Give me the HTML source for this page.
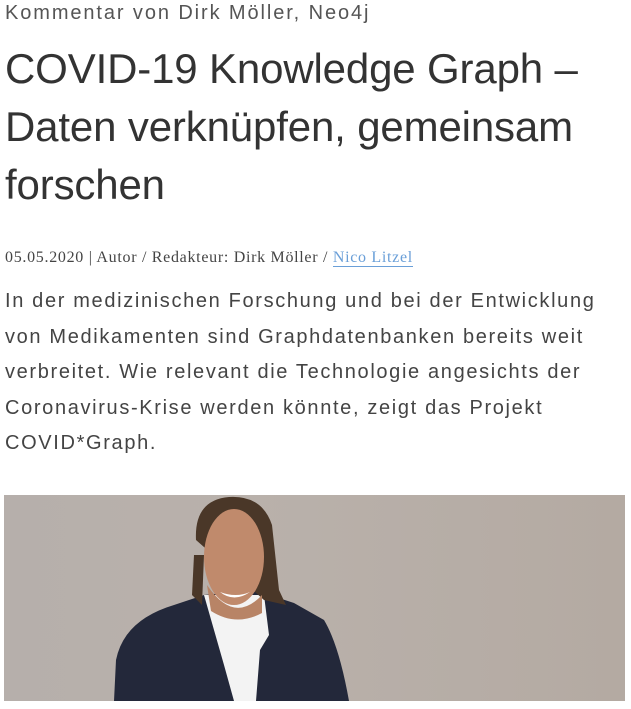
<!DOCTYPE html>
<html><head><meta charset="utf-8"><style>
body{margin:0;background:#fff;width:631px;height:709px;overflow:hidden;font-family:"Liberation Sans",sans-serif;color:#333}
.k{position:absolute;left:5px;top:2px;font-size:20px;color:#555;white-space:nowrap;letter-spacing:1.9px}
h1{position:absolute;left:5px;top:40px;margin:0;font-weight:300;font-size:42px;line-height:58px;color:#333;width:630px;letter-spacing:-0.15px}
.m{position:absolute;left:5px;top:249px;font-family:"Liberation Serif",serif;font-size:16px;color:#444;white-space:nowrap;letter-spacing:0.7px}
.m a{color:#6a9fd8;text-decoration:none;border-bottom:1px solid #6a9fd8}
.l{position:absolute;left:5px;top:284px;font-size:20px;line-height:35.5px;color:#444;width:630px;letter-spacing:1.65px;white-space:nowrap}
.img{position:absolute;left:4px;top:495px;width:621px;height:206px;background:linear-gradient(90deg,#b6afab,#b9b1ab 40%,#b4aaa2);overflow:hidden}
</style></head><body>
<div class="k">Kommentar von Dirk Möller, Neo4j</div>
<h1>COVID-19 Knowledge Graph –<br>Daten verknüpfen, gemeinsam<br>forschen</h1>
<div class="m">05.05.2020 | Autor / Redakteur: Dirk Möller / <a>Nico Litzel</a></div>
<div class="l">In der medizinischen Forschung und bei der Entwicklung<br>von Medikamenten sind Graphdatenbanken bereits weit<br>verbreitet. Wie relevant die Technologie angesichts der<br>Coronavirus-Krise werden könnte, zeigt das Projekt<br>COVID*Graph.</div>
<div class="img"><svg width="621" height="206" viewBox="0 0 621 206">
<g transform="translate(20,0)">
<path d="M90 206 L92 165 Q100 125 150 110 L180 100 L230 95 L270 108 L300 125 Q315 150 325 206Z" fill="#23283a"/>
<path d="M180 100 L200 170 L210 206 L232 206 L236 155 L245 140 L240 100Z" fill="#f3f3f3"/>
<path d="M172 45 Q170 5 205 2 Q238 0 248 30 L255 95 L262 110 L240 105 Z" fill="#4a3728"/>
<path d="M170 60 L168 100 L178 110 L180 60Z" fill="#4a3728"/>
<ellipse cx="210" cy="62" rx="30" ry="48" fill="#c08a6c"/>
<path d="M183 90 Q210 130 238 100 L238 118 Q212 132 187 116Z" fill="#b88466"/>
<path d="M196 97 Q210 108 226 97 Q212 103 196 97Z" fill="#fff"/>
</g>
</svg></div>
</body></html>
